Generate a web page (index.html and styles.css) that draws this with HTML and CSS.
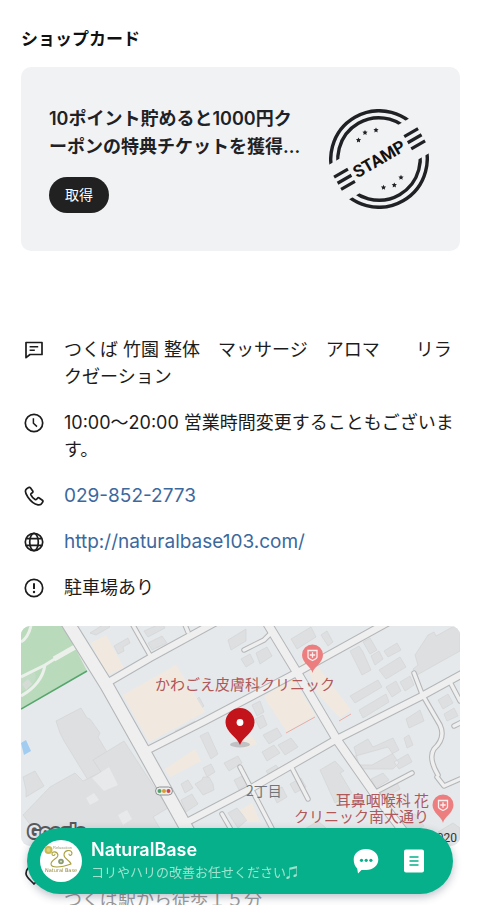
FILE: index.html
```html
<!DOCTYPE html>
<html lang="ja">
<head>
<meta charset="utf-8">
<meta name="viewport" content="width=device-width, initial-scale=1">
<title>NaturalBase</title>
<link rel="stylesheet" href="styles.css">
</head>
<body>
<main class="page">
  <section>
    <h2 class="section-title">ショップカード</h2>
    <div class="card">
      <div class="card-body">
        <p class="card-text">10ポイント貯めると1000円クーポンの特典チケットを獲得...</p>
        <button class="get-button" type="button">取得</button>
      </div>
      <svg class="stamp" viewBox="-50 -50 100 100" role="img" aria-label="STAMP">
        <defs>
          <clipPath id="arcs"><path d="M-60-60H60V-20H-60ZM-60 20H60V60H-60Z"/></clipPath>
          <path id="star" d="M0-2.6.8-.9 2.6-.7 1.3.6 1.6 2.4 0 1.5-1.6 2.4-1.3.6-2.6-.7-.8-.9Z"/>
        </defs>
        <g transform="rotate(-30)">
          <g clip-path="url(#arcs)" fill="none" stroke="#202124" stroke-width="3.4">
            <circle r="48.2"/><circle r="41.2"/>
          </g>
          <path d="M-48-6.7h16M-48 .3h16M-48 7.3h16M33-6.7h16M33 .3h16M33 7.3h16" stroke="#202124" stroke-width="3.2"/>
          <text class="stamp-text" x="0" y="6" text-anchor="middle">STAMP</text>
        </g>
        <g fill="#202124">
          <use href="#star" x="-20.5" y="-19"/><use href="#star" x="-14" y="-26.5"/><use href="#star" x="-3" y="-29"/>
          <use href="#star" x="4.5" y="28.3"/><use href="#star" x="15.3" y="26"/><use href="#star" x="22" y="18.3"/>
        </g>
      </svg>
    </div>
  </section>

  <ul class="info">
    <li class="row">
      <svg class="icon" viewBox="0 0 20 20"><path d="M2 2.5h16v12H6l-4 3.2Z"/><path d="M5.6 6.8h8.6M5.6 10.2h5.2" stroke-width="1.5"/></svg>
      <p>つくば 竹園 整体　マッサージ　アロマ　　リラクゼーション</p>
    </li>
    <li class="row">
      <svg class="icon" viewBox="0 0 20 20"><circle cx="10" cy="10" r="8.7"/><path d="M9.4 5.2v5l3.6 3.4" stroke-width="1.5"/></svg>
      <p>10:00〜20:00 営業時間変更することもございます。</p>
    </li>
    <li class="row">
      <svg class="icon" viewBox="0 0 20 20"><path d="M4.6 1.6 2.7 2.7C.9 4 1.2 7.1 3.8 10.9c2.7 4 7 7.3 10.2 7.9 1.9.3 3.3-.4 4.2-2l.6-1c.3-.6.1-1.2-.4-1.6l-3.2-2.2c-.6-.4-1.3-.3-1.7.2l-.9 1.1c-.4.5-1 .5-1.5.2-1.900-1.200-3.300-2.800-4.200-4.700-.2-.5-.1-1 .4-1.400l1-.7c.6-.4.7-1.100.4-1.700L6.600 2.100c-.4-.7-1.300-.9-2-.5Z"/></svg>
      <p><a href="tel:029-852-2773">029-852-2773</a></p>
    </li>
    <li class="row">
      <svg class="icon" viewBox="0 0 20 20"><circle cx="10" cy="10" r="8.7"/><ellipse cx="10" cy="10" rx="4.3" ry="8.7"/><path d="M2.3 6.7h15.4M2.3 13.3h15.4"/></svg>
      <p><a href="http://naturalbase103.com/">http://naturalbase103.com/</a></p>
    </li>
    <li class="row">
      <svg class="icon" viewBox="0 0 20 20"><circle cx="10" cy="10" r="8.7"/><path d="M10 5.3v5.7" stroke-width="2"/><circle cx="10" cy="14" r="1.2" fill="#1c1c1c" stroke="none"/></svg>
      <p>駐車場あり</p>
    </li>
  </ul>

  <svg class="map" viewBox="21 626 439 220" preserveAspectRatio="xMidYMid slice" role="img" aria-label="地図">
    <rect x="21" y="626" width="439" height="220" fill="#e6e9eb"/>
    <path d="M21 626H64L87 671 21 709Z" fill="#b9dabb"/>
    <path d="M21 709 87 671" stroke="#55a56c" stroke-width="1.5"/>
    <path d="M21 675q10-3 14-2 4 10-14 19Z" fill="#c3dcc5"/>
    <g fill="none" stroke="#ebf0eb" stroke-width="3">
      <path d="M21 642q7-4 10-16M75 648q-15 7-30 17-10 5-24 12M45 665Q42 684 21 696"/>
      <path d="M75 647 54 659" stroke-width="5"/>
    </g>
    <path d="M22 684l6-5 4 5-6 6Z" fill="#d4dcd5"/>
    <path d="M21 743l5-3 5 11-7 4Z" fill="#a2cdf0"/>

    <g fill="#dddfe0" stroke="#d2d4d6" stroke-width=".7">
      <path d="M90 633l16-10 4 4-14 8ZM114 646l14-8 2 5-7 4 1 4-6 3Z"/>
      <path d="M56 721l25-13 6 10 3 1 10 14-2 4 16 27-26 16-24-39-4-8Z"/>
      <path d="M144 631l18-8 3 5-17 9ZM148 643l14-7 5 7-15 7ZM228 640l18-11v12l-15 9ZM241 659l9-5 4 8-8 5ZM256 653l11-6 5 9-12 8Z"/>
      <path d="M175 731l20-10 2 4-20 10ZM196 700l3-3 5 9-4 3ZM200 736l8-4 10 22-7 5Z"/>
      <path d="M252 705l8-4 4 11-7 4ZM255 719l8-4 4 10-7 4ZM263 735l14-7 5 8-13 8Z"/>
      <path d="M291 639l20-12 5 10-19 12ZM321 635l6-4 6 11-5 4Z"/>
      <path d="M350 651l9-5 4 6 8 18-9 5ZM363 642l7-4 7 12-7 4ZM371 656l8-5 4 8-8 6ZM384 651l13-8 4 7-13 7Z"/>
      <path d="M379 670l21-13 6 10-20 12ZM350 696l28-16 4 7-27 16ZM359 710l27-16 3 8-26 16ZM386 687l10-6 5 10-9 6ZM400 682l10-6 4 9-9 6Z"/>
      <path d="M415 655l13-20 6-3 2 4 24-13v28l-43 24-4-6 5-4Z"/>
      <path d="M438 700l10-6 5 9-10 6ZM444 714l10-6 4 8-11 5ZM406 719l14-9 4 11-15 7ZM404 738l5-3 4 10-6 3Z"/>
      <path d="M354 747l14-8 5 8 20-9 6 12-27 15h-13ZM320 770l15-9 9 10-4 2 12 20-17 10ZM352 757l11 12 30 0 6-6-11-16ZM371 779l12-6 6 7-13 8ZM394 762l14-8 4 8-13 7Z"/>
      <path d="M373 794l23-13 4 8-22 12ZM262 752l12-7 6 8-13 8ZM278 745l13-7 7 9-13 8ZM266 771l10-6 6 8-10 6ZM290 784l11-6 5 9-11 6ZM272 792l10-5 5 10-10 6Z"/>
      <path d="M181 784l7-4 5 8-8 5ZM195 784l7-4 1-3 6 0 4 7 1 6-11 5ZM181 800l11-6 6 10-12 8ZM203 768l8-4 4 8-8 5ZM224 763l14-7 4 7-13 8ZM234 780l8-4 5 8-8 6ZM228 813l9-5 10 12-9 8Z"/>
      <path d="M23 777l12-6 9 15-18 11v-7ZM23 815l27-28 25-14 8 8 18-9-8-12 31-19 44 67-15 9 11 18H38Z"/>
      <path d="M303 830l15-9 8 7-8 12ZM395 825l20-11 9 12-16 8ZM438 832l15-9 7 5v14Z"/>
    </g>
    <path d="M86 798l8-5 5 7-9 5ZM118 815l9-5 5 9-9 6ZM92 778l17-11 9 18-14 6Z" fill="#e7e9eb"/>
    <path d="M91 643l15-8 18 33-17 7ZM123 695l53-30 29 47-56 30ZM264 697l28-20 23 38-28 17ZM309 672l9-5 33 43-11 8-22-24ZM165 769l30-20 6 12-31 16ZM298 667l10-10 8 9-8 7ZM236 742l16-6 5 8-14 5ZM240 810l12-7 8 19h-12Z" fill="#f1e9df"/>
    <path d="M286 733l29-16M339 721l12-7" stroke="#e6aca3" stroke-width="1"/>

    <g fill="none" stroke-linejoin="round" stroke-linecap="round">
      <g stroke="#b4b7b9">
        <path stroke-width="14.5" d="M66 620 107 686 143 750 193 840"/>
        <path stroke-width="10" d="M264 618 298 674 337 740 374 793 410 840"/>
        <path stroke-width="8.5" d="M107 683 150 658 225 617M144 752 205 721 298 672 392 620M187 822 250 789 337 739 420 697 475 667"/>
        <path stroke-width="5.5" d="M151 657 130 620M188 632 183 620M414 673 422 694 440 725Q446 738 434 749 428 758 438 775M437 777 444 786 460 779M240 767 278 840M292 768 308 799M374 793 412 773M244 650 264 640 273 631M222 814 237 840M449 680 460 701M454 726l8-4"/>
      </g>
      <g stroke="#efefef">
        <path stroke-width="12.3" d="M66 620 107 686 143 750 193 840"/>
        <path stroke-width="8" d="M264 618 298 674 337 740 374 793 410 840"/>
        <path stroke-width="6.4" d="M107 683 150 658 225 617M144 752 205 721 298 672 392 620M187 822 250 789 337 739 420 697 475 667"/>
        <path stroke-width="3.4" d="M151 657 130 620M188 632 183 620M414 673 422 694 440 725Q446 738 434 749 428 758 438 775M437 777 444 786 460 779M240 767 278 840M292 768 308 799M374 793 412 773M244 650 264 640 273 631M222 814 237 840M449 680 460 701M454 726l8-4"/>
      </g>
    </g>

    <g>
      <rect x="155.5" y="787" width="17" height="8" rx="4" fill="#eee" stroke="#8c8f91"/>
      <circle cx="159.5" cy="791" r="2" fill="#4fa06b"/><circle cx="164" cy="791" r="2" fill="#d99c31"/><circle cx="168.5" cy="791" r="2" fill="#cf4646"/>
    </g>

    <defs>
      <g id="clinic">
        <path d="M0 18C-1 12-10.500 8-10.500 0a10.500 10.500 0 0 1 21 0C10.500 8 1 12 0 18Z" fill="#ec7e80"/>
        <path d="M-4.500-4.500h9v6.500q0 1.500-4.500 3.500-4.500-2-4.500-3.500ZM0-2.700V2.700M-2.700 0H2.700" fill="none" stroke="#fbeeee" stroke-width="1.3"/>
      </g>
    </defs>
    <use href="#clinic" x="312.5" y="655"/>
    <use href="#clinic" x="443" y="805"/>

    <g class="map-label">
      <text x="245" y="690" text-anchor="middle">かわごえ皮膚科クリニック</text>
      <text x="429" y="806" text-anchor="end">耳鼻咽喉科 花</text>
      <text x="429" y="822" text-anchor="end">クリニック南大通り</text>
    </g>
    <text class="map-district" x="246" y="796">2丁目</text>

    <ellipse cx="240" cy="744.5" rx="10" ry="3" fill="#bfc1c3"/>
    <path d="M240 745C238 738 225.500 732 225.500 722.500a14.500 14.500 0 0 1 29 0C254.500 732 242 738 240 745Z" fill="#c3141b"/>
    <circle cx="240" cy="722.5" r="3.4" fill="#fff"/>

    <text class="map-brand" x="28" y="838">Google</text>
    <text class="map-copy" x="457" y="842" text-anchor="end">©2020</text>
  </svg>

  <div class="row address">
    <svg class="icon" viewBox="0 0 20 20"><path d="M10 19C7 15.500 2 12.500 2 8.500a8 8 0 0 1 16 0C18 12.500 13 15.500 10 19Z"/><circle cx="10" cy="8.5" r="2.5"/></svg>
    <p class="access">つくば駅から徒歩１５分</p>
  </div>
</main>

<footer class="bar">
  <svg class="avatar" viewBox="0 0 42 42" role="img" aria-label="Natural Base">
    <circle cx="21" cy="21" r="21" fill="#fff"/>
    <circle cx="8.500" cy="10" r="4" fill="#c9b950"/><circle cx="8.500" cy="10" r="2" fill="#ded47e"/>
    <g fill="none" stroke="#aaa03f" stroke-width="1.1" stroke-linecap="round">
      <path d="M18 15c-1-4-6-4-6-1 0 2 3 2 3 0M17 13c4 5-6 6-6 11 0 4 9 4 20 0-1-4-7-5-7-9 0-5 7-6 8-2 0 3-3 3-3 1"/>
    </g>
    <circle cx="21" cy="21.5" r="2.8" fill="#8a9a72"/><circle cx="21" cy="21.5" r="1" fill="#dce2cf"/>
    <text class="avatar-small" x="13" y="9">Relaxation</text>
    <text class="avatar-name" x="21" y="32" text-anchor="middle">Natural Base</text>
  </svg>
  <div class="bar-text">
    <p class="bar-name">NaturalBase</p>
    <p class="bar-note">コリやハリの改善お任せください♫</p>
  </div>
  <button class="bar-button" type="button" aria-label="トーク">
    <svg viewBox="0 0 26 26"><path d="M13 1c7 0 12.300 4.400 12.300 10.500S20 22 13 22H8.500L5 25.500 4.200 20.500C2 18.500.7 15.500.7 11.500.7 5.400 6 1 13 1Z" fill="#fff"/><g fill="#06b08a"><circle cx="8.500" cy="12.300" r="1.600"/><circle cx="13.200" cy="12.300" r="1.600"/><circle cx="17.900" cy="12.300" r="1.600"/></g></svg>
  </button>
  <button class="bar-button" type="button" aria-label="投稿">
    <svg viewBox="0 0 26 26"><rect x="3" y="1.500" width="20" height="23" rx="2" fill="#fff"/><path d="M8.500 9h9M8.500 13h9M8.500 17h9" stroke="#06b08a" stroke-width="1.400"/></svg>
  </button>
</footer>
</body>
</html>
```
FILE: styles.css
```css
* {
  box-sizing: border-box;
}

body {
  margin: 0;
  background: #fff;
  color: #1c1c1c;
  font-family: Inter, "Noto Sans CJK JP", sans-serif;
  font-size: 18px;
  line-height: 27px;
}

h2,
p,
ul {
  margin: 0;
  padding: 0;
}

.page {
  height: 100vh;
  overflow-y: auto;
  scrollbar-width: none;
  padding: 24px 20px 0 21px;
}

.section-title {
  margin-bottom: 13px;
  color: #111;
  font-size: 17px;
  line-height: 30px;
  font-weight: 700;
}

.card {
  display: flex;
  align-items: center;
  justify-content: space-between;
  gap: 20px;
  padding: 38px 31px 38px 28px;
  border-radius: 10px;
  background: #f1f2f4;
}

.card-body {
  flex: 1;
}

.card-text {
  margin-bottom: 16px;
  font-size: 18px;
  line-height: 28px;
  font-weight: 600;
  color: #202124;
  word-break: break-all;
  line-break: anywhere;
}

.get-button {
  display: block;
  height: 36px;
  padding: 0 16px;
  border: 0;
  border-radius: 18px;
  background: #212121;
  color: #fff;
  font: 14px/36px Inter, "Noto Sans CJK JP", sans-serif;
}

.stamp {
  flex: none;
  width: 100px;
  height: 100px;
}

.stamp-text {
  font: 700 17px Roboto, sans-serif;
  fill: #111;
}

.info {
  display: grid;
  gap: 19px;
  margin-top: 85px;
  list-style: none;
}

.row {
  display: flex;
  gap: 20px;
  padding-left: 3px;
}

.row p {
  flex: 1;
  line-break: anywhere;
}

.row a {
  display: block;
  color: #3b699e;
  font-size: 19px;
  text-decoration: none;
}

.icon {
  flex: none;
  width: 20px;
  height: 20px;
  margin-top: 4px;
  fill: none;
  stroke: #1c1c1c;
  stroke-width: 1.7;
  stroke-linejoin: round;
}

.map {
  display: block;
  width: 100%;
  margin-top: 25px;
  border-radius: 9px;
}

.map-label {
  font: 15px "Noto Sans CJK JP", sans-serif;
  fill: #b0575a;
}

.map-district {
  font: 14px "Noto Sans CJK JP", sans-serif;
  fill: #717579;
}

.map-brand {
  font: 700 18px Roboto, sans-serif;
  fill: #e8e8e8;
  stroke: #58595b;
  stroke-width: 4px;
  paint-order: stroke;
}

.map-copy {
  font: 12px Roboto, sans-serif;
  fill: #333;
}

.address {
  margin-top: 13px;
}

.address .icon {
  margin-top: 6px;
}

.access {
  padding-top: 27px;
  color: #9a9a9a;
}

.bar {
  position: fixed;
  right: 27px;
  bottom: 11px;
  left: 27px;
  display: flex;
  align-items: center;
  height: 66px;
  padding: 0 26px 0 13px;
  border-radius: 33px;
  background: #06b08a;
  box-shadow: 0 3px 9px rgba(40, 50, 80, 0.3);
}

.avatar {
  flex: none;
  width: 42px;
  height: 42px;
  margin-right: 9px;
}

.avatar-small {
  font: 4px "Liberation Sans", sans-serif;
  fill: #9b9b7a;
}

.avatar-name {
  font: 5px "DejaVu Sans", sans-serif;
  fill: #96883a;
}

.bar-text {
  flex: 1;
  white-space: nowrap;
}

.bar-name {
  color: #fff;
  font-size: 18px;
  line-height: 22px;
  font-weight: 600;
}

.bar-note {
  color: #9fe2cf;
  font-size: 13px;
  line-height: 22px;
}

.bar-button {
  width: 26px;
  height: 26px;
  padding: 0;
  border: 0;
  background: none;
}

.bar-button + .bar-button {
  margin-left: 22px;
}

.bar-button svg {
  display: block;
}
```
